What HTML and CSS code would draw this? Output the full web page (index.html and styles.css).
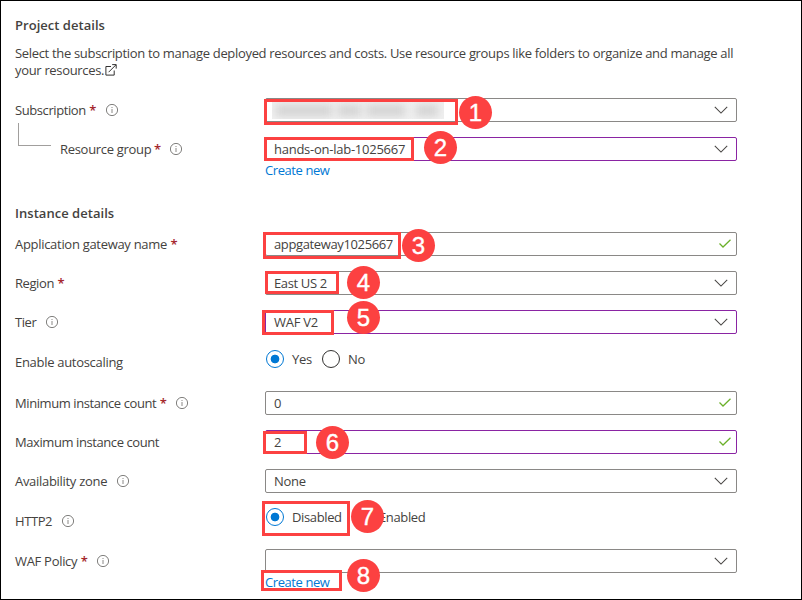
FILE: index.html
```html
<!DOCTYPE html>
<html lang="en">
<head>
<meta charset="utf-8">
<title>Create application gateway</title>
<link rel="stylesheet" href="styles.css">
</head>
<body>
<svg width="0" height="0" class="defs" aria-hidden="true">
  <symbol id="info" viewBox="0 0 12 12"><circle cx="6" cy="6" r="5.6" fill="none" stroke="#605e5c" stroke-width=".8"/><path d="M6 5v4M6 3v1" stroke="#8a8886" stroke-width="1"/></symbol>
  <symbol id="chevron" viewBox="0 0 14 8"><path d="M.8.8 7 7 13.2.8" fill="none" stroke="#484644" stroke-width="1.05"/></symbol>
  <symbol id="check" viewBox="0 0 12 9"><path d="M.5 4.5 4 8 11.5.7" fill="none" stroke="#6bb02a" stroke-width="1.25"/></symbol>
</svg>
<main class="page">
  <h2 class="heading">Project details</h2>
  <p class="intro">Select the subscription to manage deployed resources and costs. Use resource groups like folders to organize and manage all<br>your resources.<svg class="external" viewBox="0 0 12 12"><path d="M6 2.5H.9v8.6h8.3V6.500M3.600 8.200 10.900.9M7.200.6h4v4" fill="none" stroke="#323130" stroke-width="1"/></svg></p>

  <section class="rows project">
    <div class="row">
      <div class="label"><span>Subscription</span><b>*</b><svg class="info"><use href="#info"/></svg></div>
      <div class="field"><span class="redacted"><i class="smudge s1"></i><i class="smudge s2"></i><i class="smudge s3"></i><i class="smudge s4"></i></span><svg class="chevron"><use href="#chevron"/></svg></div>
    </div>
    <div class="row">
      <div class="label child"><i class="elbow"></i><span>Resource group</span><b>*</b><svg class="info"><use href="#info"/></svg></div>
      <div class="field edited"><span>hands-on-lab-1025667</span><svg class="chevron"><use href="#chevron"/></svg></div>
    </div>
    <a class="link">Create new</a>
  </section>

  <h2 class="heading instance-heading">Instance details</h2>
  <section class="rows instance">
    <div class="row">
      <div class="label name"><span>Application gateway name</span><b>*</b></div>
      <div class="field"><span class="gateway">appgateway1025667</span><svg class="check"><use href="#check"/></svg></div>
    </div>
    <div class="row">
      <div class="label"><span>Region</span><b>*</b></div>
      <div class="field"><span class="region">East US 2</span><svg class="chevron"><use href="#chevron"/></svg></div>
    </div>
    <div class="row">
      <div class="label"><span>Tier</span><svg class="info"><use href="#info"/></svg></div>
      <div class="field edited"><span>WAF V2</span><svg class="chevron"><use href="#chevron"/></svg></div>
    </div>
    <div class="row choice autoscale">
      <div class="label name"><span>Enable autoscaling</span></div>
      <div class="radios"><i class="radio on"></i><span class="yes">Yes</span><i class="radio"></i><span>No</span></div>
    </div>
    <div class="row">
      <div class="label"><span>Minimum instance count</span><b>*</b><svg class="info"><use href="#info"/></svg></div>
      <div class="field"><span>0</span><svg class="check"><use href="#check"/></svg></div>
    </div>
    <div class="row">
      <div class="label"><span>Maximum instance count</span></div>
      <div class="field edited"><span>2</span><svg class="check"><use href="#check"/></svg></div>
    </div>
    <div class="row">
      <div class="label zone"><span>Availability zone</span><svg class="info"><use href="#info"/></svg></div>
      <div class="field"><span>None</span><svg class="chevron"><use href="#chevron"/></svg></div>
    </div>
    <div class="row choice http">
      <div class="label"><span>HTTP2</span><svg class="info"><use href="#info"/></svg></div>
      <div class="radios"><i class="radio on"></i><span class="disabled">Disabled</span><i class="radio"></i><span class="enabled">Enabled</span></div>
    </div>
    <div class="row">
      <div class="label name"><span>WAF Policy</span><b>*</b><svg class="info"><use href="#info"/></svg></div>
      <div class="field"><svg class="chevron"><use href="#chevron"/></svg></div>
    </div>
    <a class="link">Create new</a>
  </section>

  <i class="mark m1"></i><i class="mark m2"></i><i class="mark m3"></i><i class="mark m4"></i>
  <i class="mark m5"></i><i class="mark m6"></i><i class="mark m7"></i><i class="mark m8"></i>
  <span class="step n1">1</span><span class="step n2">2</span><span class="step n3">3</span><span class="step n4">4</span>
  <span class="step n5">5</span><span class="step n6">6</span><span class="step n7">7</span><span class="step n8">8</span>
</main>
</body>
</html>
```
FILE: styles.css
```css
* { box-sizing: border-box; }
body {
  margin: 0;
  background: #fff;
  color: #444240;
  font: 13px/17px "Open Sans", "Noto Sans", sans-serif;
  letter-spacing: -0.25px;
}
.defs { position: absolute; }
.page {
  position: relative;
  width: 802px;
  height: 600px;
  overflow: hidden;
  border: 1px solid #000;
  padding: 15px 0 0 14px;
}
.heading { margin: 0; font-size: 13px; line-height: 18px; font-weight: 600; letter-spacing: 0.03px; }
.intro { margin: 11px 0 0; white-space: nowrap; letter-spacing: -0.323px; }
.external { width: 12px; height: 12px; margin-left: 1px; vertical-align: -1px; }

.rows { display: flex; flex-direction: column; }
.project { margin-top: 19px; }
.row { display: flex; height: 24px; margin-bottom: 15px; }
.label { display: flex; align-items: center; width: 250px; flex: none; white-space: nowrap; letter-spacing: -0.42px; }
.label.name, .label.zone, .label.child { letter-spacing: -0.3px; }
.label b { margin-left: 3.5px; color: #a4262c; font-weight: 600; letter-spacing: -0.2px; }
.child b { margin-left: 2.5px; }
.info { width: 12px; height: 12px; margin: 0 0 0 9.5px; }
.child .info { margin-left: 9px; }
.elbow {
  width: 33px;
  height: 23px;
  margin: -29px 9px 0 3px;
  border: solid #a19f9d;
  border-width: 0 0 1px 1px;
}
.field {
  display: flex;
  align-items: center;
  width: 472px;
  height: 24px;
  padding-left: 8px;
  border: 1px solid #8a8886;
  border-radius: 2px;
}
.gateway { letter-spacing: -0.37px; }
.region { letter-spacing: -0.37px; }
.edited { border-color: #8a24a3; }
.chevron { width: 14px; height: 8px; margin: 0 8px 0 auto; }
.check { width: 12px; height: 9px; margin: 0 5px 1px auto; }
.redacted {
  display: flex;
  align-items: center;
  width: 172px;
  height: 17px;
  margin-left: -2px;
  overflow: hidden;
  background: #f0f0f0;
}
.smudge { height: 11px; background: #d2d2d2; filter: blur(4.500px); }
.s1 { width: 56px; margin-left: 4px; }
.s2 { width: 23px; margin-left: 6px; }
.s3 { width: 38px; margin-left: 6px; }
.s4 { width: 22px; margin-left: 11px; }

.link { margin: -15px 0 0 250px; height: 19px; line-height: 19px; color: #0078d4; letter-spacing: -0.42px; }
.instance-heading { margin-top: 24px; }
.instance { margin-top: 10px; }

.choice { align-items: center; }
.autoscale { height: 26px; margin: -3px 0 19px; }
.autoscale .label { padding-top: 6px; }
.http { height: 26px; margin: -4px 0 19px; }
.http .label { padding-top: 8px; }
.radios { display: flex; align-items: center; padding-left: 1px; }
.radio { width: 18px; height: 18px; border: 1px solid #323130; border-radius: 50%; margin-right: 8px; }
.radio.on { border-color: #0078d4; background: radial-gradient(circle, #0078d4 4px, transparent 4.700px); }
.yes { width: 30px; }
.disabled { width: 61px; }
.disabled, .enabled { letter-spacing: -0.37px; }

.mark { position: absolute; border: 3px solid #fc4141; }
.m1 { left: 263px; top: 98px; width: 194px; height: 26px; }
.m2 { left: 263px; top: 136px; width: 150px; height: 24px; }
.m3 { left: 262px; top: 231px; width: 138px; height: 27px; }
.m4 { left: 264px; top: 270px; width: 74px; height: 23px; }
.m5 { left: 261px; top: 309px; width: 72px; height: 25px; }
.m6 { left: 262px; top: 430px; width: 44px; height: 23px; }
.m7 { left: 261px; top: 500px; width: 88px; height: 35px; }
.m8 { left: 260px; top: 569px; width: 81px; height: 21px; }
.step {
  position: absolute;
  width: 33px;
  height: 33px;
  border-radius: 50%;
  background: #fc4141;
  color: #fff;
  font: 24px/33px "Liberation Sans", sans-serif;
  letter-spacing: 0;
  text-align: center;
  -webkit-text-stroke: 0.4px #fff;
}
.n1 { left: 458px; top: 95px; }
.n2 { left: 423px; top: 130px; }
.n3 { left: 401px; top: 228px; }
.n4 { left: 346px; top: 265px; }
.n5 { left: 346px; top: 300px; }
.n6 { left: 315px; top: 425px; }
.n7 { left: 350px; top: 499px; }
.n8 { left: 346px; top: 558px; }
```
